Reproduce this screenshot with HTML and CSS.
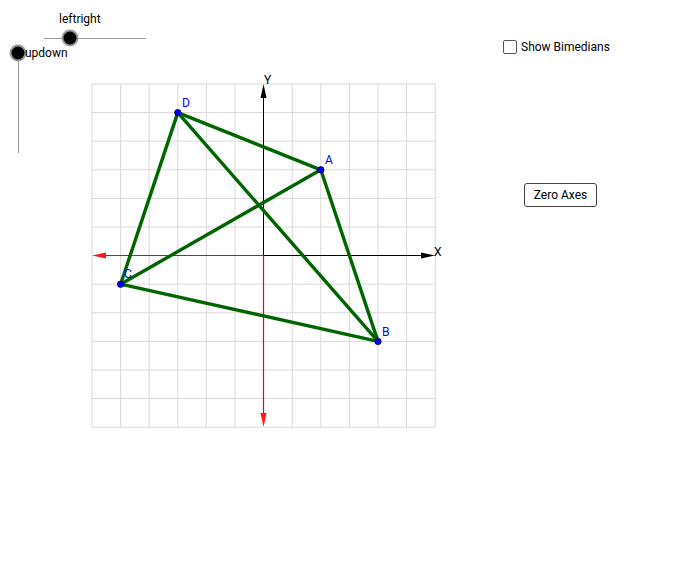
FILE: index.html
```html
<!DOCTYPE html>
<html>
<head>
<meta charset="utf-8">
<link rel="stylesheet" href="styles.css">
</head>
<body>
<div class="applet">
  <svg class="canvas" width="692" height="580" viewBox="0 0 692 580" xmlns="http://www.w3.org/2000/svg">
    <g class="grid" stroke="#d9d9d9" stroke-width="1" fill="none">
      <line x1="92" y1="84" x2="92" y2="427"/>
      <line x1="120.6" y1="84" x2="120.6" y2="427"/>
      <line x1="149.2" y1="84" x2="149.2" y2="427"/>
      <line x1="177.8" y1="84" x2="177.8" y2="427"/>
      <line x1="206.4" y1="84" x2="206.4" y2="427"/>
      <line x1="235" y1="84" x2="235" y2="427"/>
      <line x1="292.2" y1="84" x2="292.2" y2="427"/>
      <line x1="320.8" y1="84" x2="320.8" y2="427"/>
      <line x1="349.4" y1="84" x2="349.4" y2="427"/>
      <line x1="378" y1="84" x2="378" y2="427"/>
      <line x1="406.6" y1="84" x2="406.6" y2="427"/>
      <line x1="435.2" y1="84" x2="435.2" y2="427"/>
      <line x1="92" y1="84" x2="435.2" y2="84"/>
      <line x1="92" y1="112.6" x2="435.2" y2="112.6"/>
      <line x1="92" y1="141.2" x2="435.2" y2="141.2"/>
      <line x1="92" y1="169.8" x2="435.2" y2="169.8"/>
      <line x1="92" y1="198.4" x2="435.2" y2="198.4"/>
      <line x1="92" y1="227" x2="435.2" y2="227"/>
      <line x1="92" y1="284.2" x2="435.2" y2="284.2"/>
      <line x1="92" y1="312.8" x2="435.2" y2="312.8"/>
      <line x1="92" y1="341.4" x2="435.2" y2="341.4"/>
      <line x1="92" y1="370" x2="435.2" y2="370"/>
      <line x1="92" y1="398.6" x2="435.2" y2="398.6"/>
      <line x1="92" y1="427.2" x2="435.2" y2="427.2"/>
    </g>
    <g class="axes">
      <line x1="263.5" y1="255.5" x2="424" y2="255.5" stroke="#000" stroke-width="1"/>
      <polygon points="435,255.5 421,252.5 421,258.5" fill="#000"/>
      <line x1="263.5" y1="255.5" x2="263.5" y2="96" stroke="#000" stroke-width="1"/>
      <polygon points="263.5,84 260.5,98 266.5,98" fill="#000"/>
      <line x1="263" y1="255.5" x2="104" y2="255.5" stroke="#ff0000" stroke-width="1.2"/>
      <polygon points="92,255.5 106,252.5 106,258.5" fill="#ff1a1a"/>
      <line x1="263.5" y1="256" x2="263.5" y2="415" stroke="#ff0000" stroke-width="1.2"/>
      <polygon points="263.5,427 260.5,413 266.5,413" fill="#ff1a1a"/>
      <text x="434" y="256" class="axis-label">X</text>
      <text x="264" y="84" class="axis-label">Y</text>
    </g>
    <g class="edges" stroke="#006400" stroke-width="3.4" stroke-linecap="round" fill="none">
      <line x1="177.8" y1="112.6" x2="320.8" y2="169.8"/>
      <line x1="320.8" y1="169.8" x2="378" y2="341.4"/>
      <line x1="378" y1="341.4" x2="120.6" y2="284.2"/>
      <line x1="120.6" y1="284.2" x2="177.8" y2="112.6"/>
      <line x1="120.6" y1="284.2" x2="320.8" y2="169.8"/>
      <line x1="177.8" y1="112.6" x2="378" y2="341.4"/>
    </g>
    <g class="points" fill="#0000ff" stroke="#000040" stroke-width="0.8">
      <circle cx="177.8" cy="112.6" r="3.2"/>
      <circle cx="320.8" cy="169.8" r="3.2"/>
      <circle cx="378" cy="341.4" r="3.2"/>
      <circle cx="120.6" cy="284.2" r="3.2"/>
    </g>
    <g class="point-labels">
      <text x="182" y="107">D</text>
      <text x="325" y="164">A</text>
      <text x="382" y="336">B</text>
      <text x="124" y="278">C</text>
    </g>
    <g class="sliders">
      <line x1="44" y1="38.5" x2="146" y2="38.5" stroke="#9a9a9a" stroke-width="1"/>
      <line x1="18.5" y1="53" x2="18.5" y2="153" stroke="#9a9a9a" stroke-width="1"/>
      <circle cx="70" cy="38" r="7.5" fill="#000" stroke="#999" stroke-width="2"/>
      <circle cx="18" cy="53" r="7.5" fill="#000" stroke="#999" stroke-width="2"/>
    </g>
  </svg>

  <div class="slider-label leftright">leftright</div>
  <div class="slider-label updown">updown</div>

  <label class="check">
    <span class="box"></span>
    <span class="check-text">Show Bimedians</span>
  </label>

  <button class="zero-btn">Zero Axes</button>
</div>
</body>
</html>
```

FILE: styles.css
```css
html, body {
  margin: 0;
  padding: 0;
  background: #ffffff;
}

.applet {
  position: relative;
  width: 692px;
  height: 580px;
  overflow: hidden;
  font-family: Roboto, "Liberation Sans", sans-serif;
  color: #000;
}

.canvas {
  position: absolute;
  left: 0;
  top: 0;
  display: block;
}

.axis-label {
  font-family: Roboto, "Liberation Sans", sans-serif;
  font-size: 12px;
  fill: #000;
}

.point-labels text {
  font-family: Roboto, "Liberation Sans", sans-serif;
  font-size: 12px;
  fill: #0000ff;
}

.slider-label {
  position: absolute;
  font-size: 12px;
  line-height: 14px;
  white-space: nowrap;
}

.leftright {
  left: 59px;
  top: 12px;
}

.updown {
  left: 25px;
  top: 46px;
}

.check {
  position: absolute;
  left: 503px;
  top: 40px;
  display: flex;
  align-items: center;
  gap: 4px;
  font-size: 12px;
  line-height: 14px;
}

.box {
  width: 12px;
  height: 12px;
  border: 1px solid #555;
  border-radius: 2px;
  background: #fff;
}

.zero-btn {
  position: absolute;
  left: 524px;
  top: 183px;
  width: 73px;
  height: 24px;
  padding: 0;
  margin: 0;
  border: 1px solid #444;
  border-radius: 3px;
  background: #fff;
  font-family: Roboto, "Liberation Sans", sans-serif;
  font-size: 12px;
  color: #000;
}
```
